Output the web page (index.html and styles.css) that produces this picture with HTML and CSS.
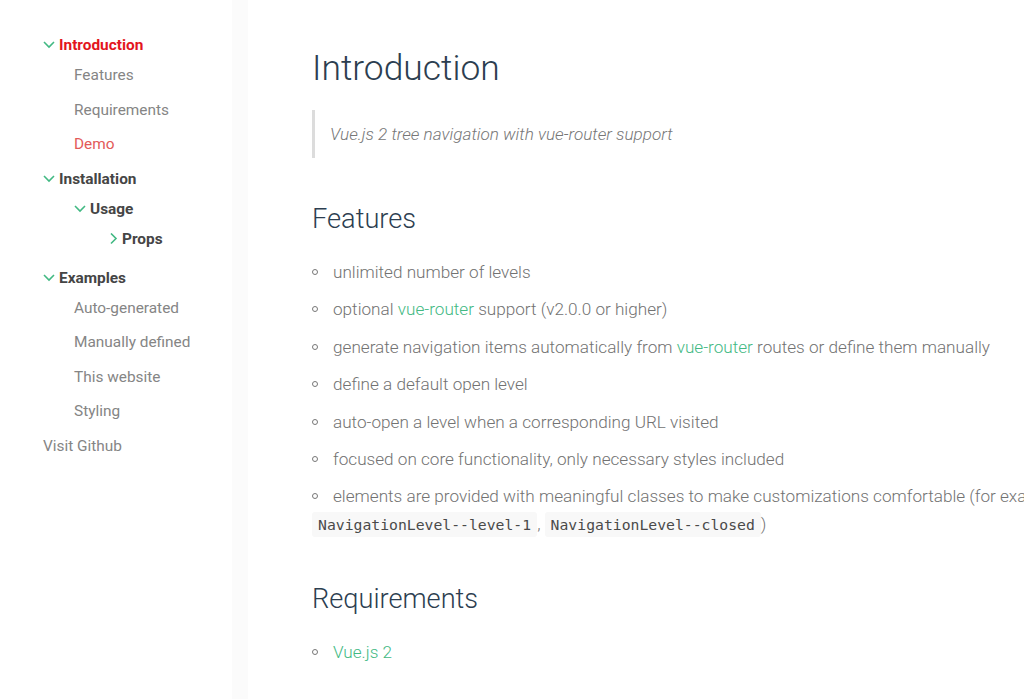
FILE: index.html
```html
<!DOCTYPE html>
<html lang="en">
<head>
<meta charset="utf-8">
<title>vue-tree-navigation</title>
<link rel="stylesheet" href="styles.css">
</head>
<body>
<div class="layout">
  <aside class="sidebar">
    <ul class="nav nav-root">
      <li class="level">
        <div class="title active"><svg class="chev" viewBox="0 0 12 12"><polyline points="1,3 6,8 11,3"/></svg><span>Introduction</span></div>
        <ul class="nav">
          <li class="leaf"><a>Features</a></li>
          <li class="leaf"><a>Requirements</a></li>
          <li class="leaf"><a class="current">Demo</a></li>
        </ul>
      </li>
      <li class="level">
        <div class="title"><svg class="chev" viewBox="0 0 12 12"><polyline points="1,3 6,8 11,3"/></svg><span>Installation</span></div>
        <ul class="nav">
          <li class="level">
            <div class="title"><svg class="chev" viewBox="0 0 12 12"><polyline points="1,3 6,8 11,3"/></svg><span>Usage</span></div>
            <ul class="nav">
              <li class="level closed">
                <div class="title"><svg class="chev" viewBox="0 0 12 12"><polyline points="5,0.5 10,5.5 5,10.5"/></svg><span>Props</span></div>
              </li>
            </ul>
          </li>
        </ul>
      </li>
      <li class="level">
        <div class="title"><svg class="chev" viewBox="0 0 12 12"><polyline points="1,3 6,8 11,3"/></svg><span>Examples</span></div>
        <ul class="nav">
          <li class="leaf"><a>Auto-generated</a></li>
          <li class="leaf"><a>Manually defined</a></li>
          <li class="leaf"><a>This website</a></li>
          <li class="leaf"><a>Styling</a></li>
        </ul>
      </li>
      <li class="leaf"><a>Visit Github</a></li>
    </ul>
  </aside>
  <main class="content">
    <h1>Introduction</h1>
    <blockquote><p>Vue.js 2 tree navigation with vue-router support</p></blockquote>
    <h2 class="h-features">Features</h2>
    <ul class="bullets">
      <li>unlimited number of levels</li>
      <li>optional <a>vue-router</a> support (v2.0.0 or higher)</li>
      <li>generate navigation items automatically from <a>vue-router</a> routes or define them manually</li>
      <li>define a default open level</li>
      <li>auto-open a level when a corresponding URL visited</li>
      <li>focused on core functionality, only necessary styles included</li>
      <li>elements are provided with meaningful classes to make customizations comfortable (for example <code>NavigationLevel--level-1</code>, <code>NavigationLevel--closed</code>)</li>
    </ul>
    <h2 class="h-req">Requirements</h2>
    <ul class="bullets">
      <li><a>Vue.js 2</a></li>
    </ul>
  </main>
</div>
</body>
</html>
```
FILE: styles.css
```css
html {
  overflow: hidden;
}
body {
  margin: 0;
  font-family: Roboto, "Liberation Sans", sans-serif;
  background: #fff;
}
.layout {
  display: flex;
  align-items: flex-start;
  width: 1200px;
  min-height: 699px;
}
.sidebar {
  flex: none;
  width: 248px;
  min-height: 699px;
  box-sizing: border-box;
  padding: 30px 0 0 43px;
  border-right: 16px solid #fbfbfb;
}
.nav {
  list-style: none;
  margin: 0;
  padding: 0 0 0 31px;
  display: flex;
  flex-direction: column;
}
.nav-root {
  padding-left: 0;
}
.nav .nav .nav {
  padding-left: 32px;
}
.title {
  display: flex;
  align-items: center;
  height: 30px;
  font-size: 15.4px;
  font-weight: 700;
  color: #454545;
}
.title.active {
  color: #e3151d;
}
.chev {
  width: 12px;
  height: 12px;
  margin-right: 4px;
  flex: none;
}
.chev polyline {
  fill: none;
  stroke: #42b983;
  stroke-width: 1.6;
}
.leaf {
  height: 30px;
  line-height: 30px;
  margin-bottom: 4.5px;
  font-size: 15.4px;
  color: #858585;
}
.leaf a {
  color: inherit;
}
.leaf a.current {
  color: #e35a58;
}
.closed {
  margin-bottom: 9px;
}
.content {
  flex: none;
  width: 800px;
  padding: 47px 0 0 64px;
  color: #727272;
  font-weight: 300;
  font-size: 17.15px;
}
h1 {
  margin: 0;
  font-size: 35.4px;
  line-height: 42px;
  font-weight: 300;
  color: #2c3e50;
}
blockquote {
  margin: 21px 0 0;
  border-left: 3px solid #dcdcdc;
  padding: 12px 0 12px 15px;
}
blockquote p {
  margin: 0;
  font-style: italic;
  font-size: 17.15px;
  line-height: 24px;
  color: #777;
}
h2 {
  margin: 0;
  font-size: 27.2px;
  line-height: 34px;
  font-weight: 300;
  color: #2c3e50;
}
.h-features {
  margin-top: 44px;
}
.h-req {
  margin-top: 43px;
}
.bullets {
  list-style: none;
  margin: 22px 0 0;
  padding: 0;
}
.bullets li {
  line-height: 28px;
  margin-bottom: 9.4px;
}
.bullets li::before {
  content: "";
  display: inline-block;
  width: 4px;
  height: 4px;
  border: 1.5px solid #777;
  border-radius: 50%;
  margin: 0 15px 0 0;
  vertical-align: 3px;
}
.bullets a {
  color: #42b983;
}
code {
  font-family: "DejaVu Sans Mono", "Liberation Mono", monospace;
  font-size: 14.75px;
  font-weight: 400;
  color: #4a4a4a;
  background: #f8f8f8;
  border-radius: 3px;
  padding: 4px 6px;
}
```
